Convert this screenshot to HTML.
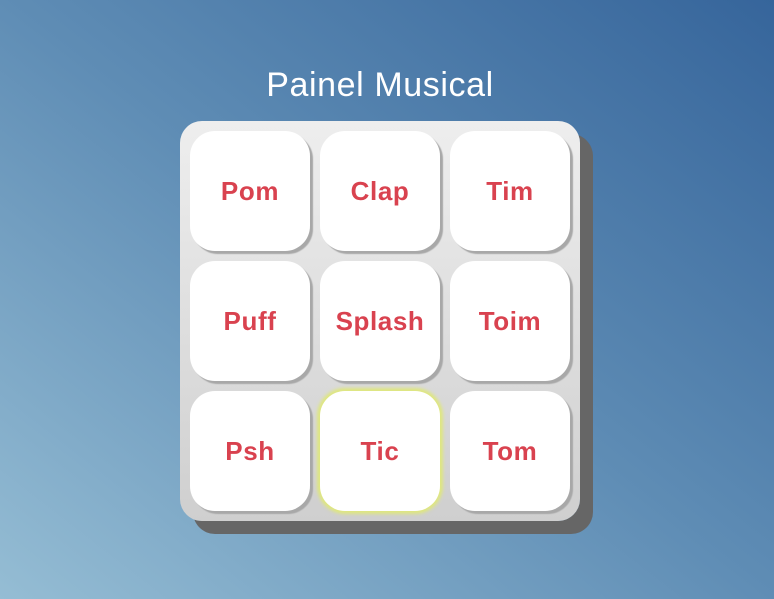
<!DOCTYPE html>
<html><head><meta charset="utf-8"><style>
html,body{margin:0;padding:0;width:774px;height:599px;overflow:hidden}
body{background:linear-gradient(to top right,#95bdd4 0%,#5f8db5 50%,#36659b 100%);font-family:"Liberation Sans",sans-serif;position:relative}
h1{position:absolute;top:65px;left:0;width:760px;text-align:center;margin:0;color:#fff;font-weight:normal;font-size:34px;letter-spacing:0.6px;line-height:40px}
.panel{position:absolute;left:180px;top:121px;width:400px;height:400px;border-radius:22px;background:linear-gradient(#eeeeee,#cfcfcf);box-shadow:13px 13px 0 #666}
.b{position:absolute;width:120px;height:120px;border-radius:25px;background:#fff;box-shadow:3px 3px 1px #a8a8a8;color:#d9424f;font-weight:bold;font-size:26px;letter-spacing:0.6px;display:flex;align-items:center;justify-content:center;padding-top:1px;box-sizing:border-box}
.g{box-shadow:0 0 3px 3px #dfe77f}
</style></head><body>
<h1>Painel Musical</h1>
<div class="panel">
<div class="b" style="left:10px;top:10px">Pom</div>
<div class="b" style="left:140px;top:10px">Clap</div>
<div class="b" style="left:270px;top:10px">Tim</div>
<div class="b" style="left:10px;top:140px">Puff</div>
<div class="b" style="left:140px;top:140px">Splash</div>
<div class="b" style="left:270px;top:140px">Toim</div>
<div class="b" style="left:10px;top:270px">Psh</div>
<div class="b g" style="left:140px;top:270px">Tic</div>
<div class="b" style="left:270px;top:270px">Tom</div>
</div>
</body></html>
